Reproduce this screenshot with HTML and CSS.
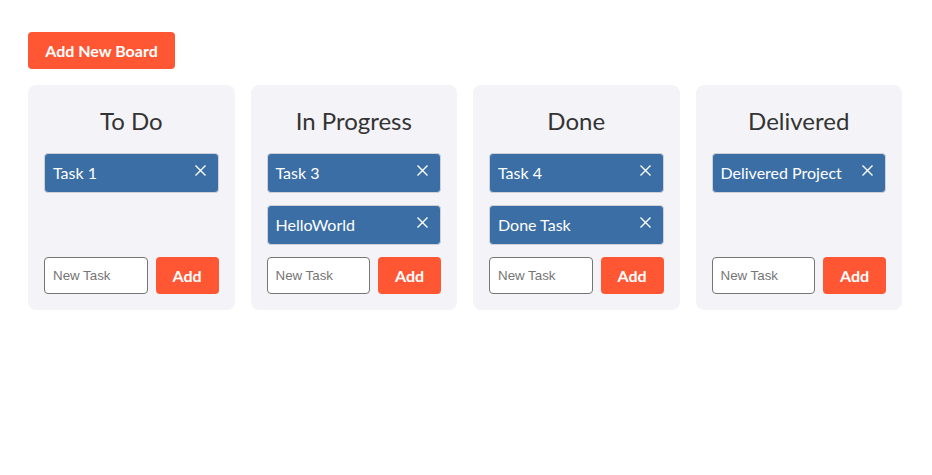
FILE: index.html
```html
<!DOCTYPE html>
<html lang="en">
<head>
<meta charset="utf-8">
<title>Boards</title>
<link rel="stylesheet" href="styles.css">
</head>
<body>
<div class="app">
  <button class="btn add-board">Add New Board</button>
  <div class="boards">
    <section class="board">
      <h2 class="board-title">To Do</h2>
      <ul class="tasks">
        <li class="task"><span>Task 1</span><button class="remove" aria-label="Remove"><svg viewBox="0 0 11 11" width="11" height="11"><path d="M0.5 0.5L10.5 10.5M10.5 0.5L0.5 10.5"/></svg></button></li>
      </ul>
      <form class="new-task"><input class="task-input" placeholder="New Task"><button type="button" class="btn add">Add</button></form>
    </section>
    <section class="board">
      <h2 class="board-title">In Progress</h2>
      <ul class="tasks">
        <li class="task"><span>Task 3</span><button class="remove" aria-label="Remove"><svg viewBox="0 0 11 11" width="11" height="11"><path d="M0.5 0.5L10.5 10.5M10.5 0.5L0.5 10.5"/></svg></button></li>
        <li class="task"><span>HelloWorld</span><button class="remove" aria-label="Remove"><svg viewBox="0 0 11 11" width="11" height="11"><path d="M0.5 0.5L10.5 10.5M10.5 0.5L0.5 10.5"/></svg></button></li>
      </ul>
      <form class="new-task"><input class="task-input" placeholder="New Task"><button type="button" class="btn add">Add</button></form>
    </section>
    <section class="board">
      <h2 class="board-title">Done</h2>
      <ul class="tasks">
        <li class="task"><span>Task 4</span><button class="remove" aria-label="Remove"><svg viewBox="0 0 11 11" width="11" height="11"><path d="M0.5 0.5L10.5 10.5M10.5 0.5L0.5 10.5"/></svg></button></li>
        <li class="task"><span>Done Task</span><button class="remove" aria-label="Remove"><svg viewBox="0 0 11 11" width="11" height="11"><path d="M0.5 0.5L10.5 10.5M10.5 0.5L0.5 10.5"/></svg></button></li>
      </ul>
      <form class="new-task"><input class="task-input" placeholder="New Task"><button type="button" class="btn add">Add</button></form>
    </section>
    <section class="board">
      <h2 class="board-title">Delivered</h2>
      <ul class="tasks">
        <li class="task"><span>Delivered Project</span><button class="remove" aria-label="Remove"><svg viewBox="0 0 11 11" width="11" height="11"><path d="M0.5 0.5L10.5 10.5M10.5 0.5L0.5 10.5"/></svg></button></li>
      </ul>
      <form class="new-task"><input class="task-input" placeholder="New Task"><button type="button" class="btn add">Add</button></form>
    </section>
  </div>
</div>
</body>
</html>
```
FILE: styles.css
```css
* { box-sizing: border-box; }
body {
  margin: 8px;
  background: #fff;
  font-family: "Segoe UI", Lato, "Noto Sans", sans-serif;
  color: #333;
}
.app {
  padding: 24px 22px 20px 20px;
}
.btn {
  font-family: inherit;
  font-size: 16px;
  font-weight: 700;
  color: #fff;
  background: #ff5733;
  border: none;
  border-radius: 4px;
  cursor: pointer;
  line-height: 21px;
}
.add-board {
  padding: 8px 16px;
  width: 147px;
  height: 37px;
  margin-bottom: 16px;
}
.boards {
  display: grid;
  grid-template-columns: repeat(4, minmax(0, 1fr));
  gap: 16px;
}
.board {
  background: #f4f4f8;
  border-radius: 8px;
  padding: 16px;
  display: flex;
  flex-direction: column;
  min-width: 0;
}
.board-title {
  margin: 0 0 12px;
  font-size: 24px;
  font-weight: 400;
  line-height: 40px;
  text-align: center;
  color: #333;
}
.tasks {
  list-style: none;
  margin: 0 0 12px;
  padding: 0;
  display: flex;
  flex-direction: column;
  gap: 12px;
}
.task {
  height: 40px;
  background: #3a6ea5;
  border: 1px solid #d0d0d8;
  border-radius: 4px;
  color: #fff;
  font-size: 16px;
  display: flex;
  align-items: center;
  justify-content: space-between;
  padding: 0 12px 1px 8px;
}
.remove {
  background: none;
  border: none;
  padding: 0;
  margin-top: -5px;
  display: flex;
  cursor: pointer;
}
.remove svg {
  stroke: #fff;
  stroke-width: 1.4;
  fill: none;
}
.new-task {
  margin: auto 0 0;
  display: flex;
  gap: 8px;
}
.task-input {
  flex: 1;
  min-width: 0;
  width: 0;
  height: 37px;
  border: 1px solid #767676;
  border-radius: 4px;
  padding: 0 8px;
  font-family: "Liberation Sans", Arial, sans-serif;
  font-size: 13.33px;
  background: #fff;
}
.task-input::placeholder { color: #757575; }
.add {
  width: 63px;
  height: 37px;
  padding: 8px 16px;
  flex: none;
}
```
